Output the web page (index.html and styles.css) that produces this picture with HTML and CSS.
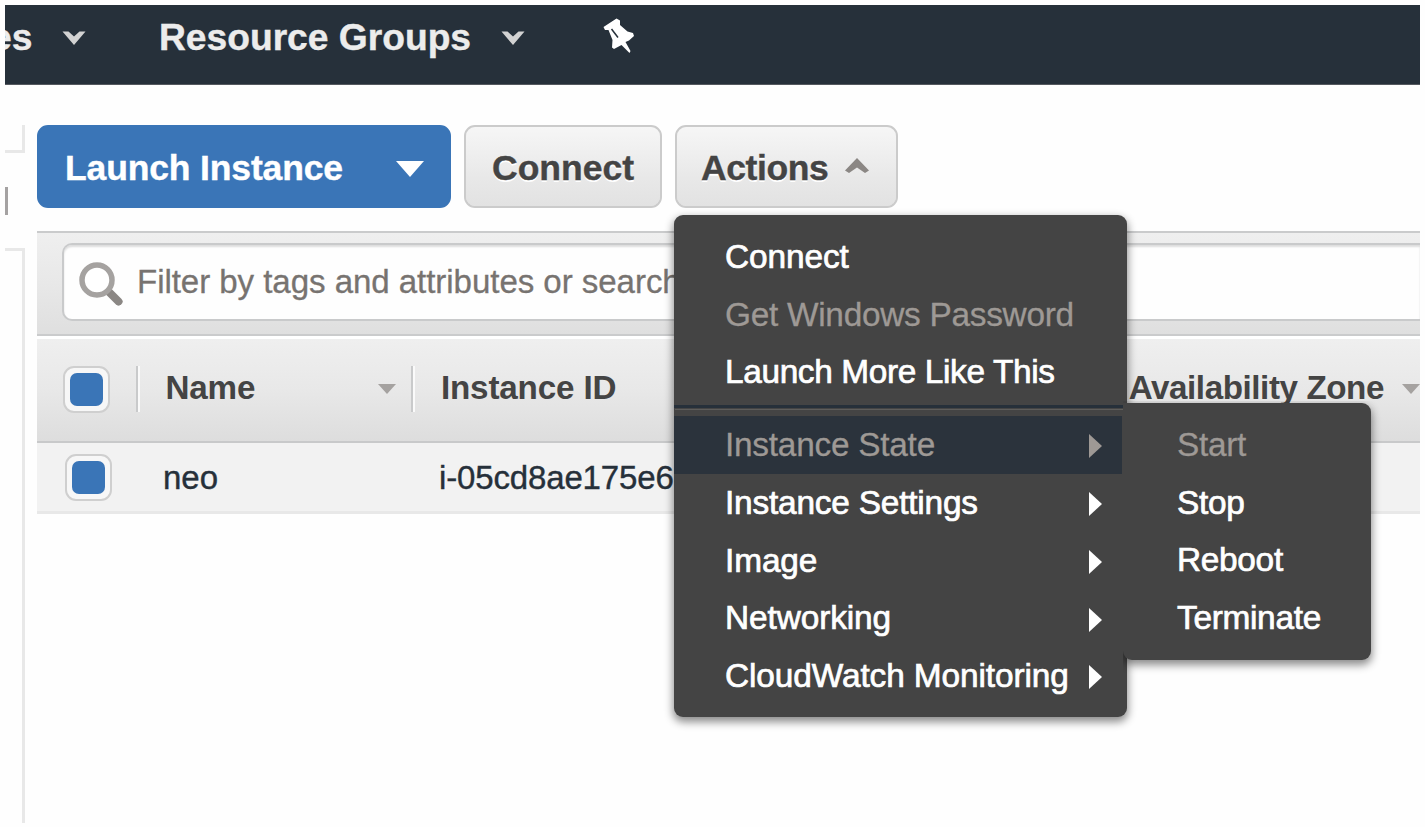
FILE: index.html
```html
<!DOCTYPE html>
<html lang="en">
<head>
<meta charset="utf-8">
<title>EC2 Instances</title>
<link rel="stylesheet" href="styles.css">
</head>
<body>
<div class="app">
  <header class="nav">
    <div class="nav-item nav-services"><span>es</span>
      <svg class="chev" viewBox="0 0 24 14"><path d="M0.500 0.500H6.500L12 5.500L17.500 0.500H23.500L12 14Z"/></svg></div>
    <div class="nav-item nav-groups"><span>Resource Groups</span>
      <svg class="chev" viewBox="0 0 24 14"><path d="M0.500 0.500H6.500L12 5.500L17.500 0.500H23.500L12 14Z"/></svg></div>
    <svg class="pin" viewBox="0 0 32 36"><path fill="#fff" d="M0.500 9L13.500 0.500L17 2.500L17 7L24.500 13.500L30 15L31 18L26 22.500L22.500 24L27.500 33L26.500 35L18.500 27L11 31L9 29.500L9.500 22L5.500 12L2 12Z"/><path d="M8.500 11L15 19.500" stroke="#26303a" stroke-width="1.500"/></svg>
  </header>
  <div class="body">
    <aside class="side">
      <div class="side-top"></div>
      <div class="side-mark"></div>
      <div class="side-panel"></div>
    </aside>
    <main class="main">
      <div class="toolbar">
        <button class="btn primary"><span>Launch Instance</span><svg class="tri" viewBox="0 0 28 16"><path d="M0 0H28L14 16Z"/></svg></button>
        <button class="btn connect"><span>Connect</span></button>
        <div class="dropdown">
          <button class="btn actions"><span>Actions</span><svg class="up" viewBox="0 0 24 15"><path d="M12 0L24 12.500L20 15L12 9.500L4 15L0 12.500Z"/></svg></button>
          <div class="menu">
            <div class="item">Connect</div>
            <div class="item disabled password">Get Windows Password</div>
            <div class="item more">Launch More Like This</div>
            <div class="sep"></div>
            <div class="item disabled active">Instance State<i class="arrow"></i></div>
            <div class="item settings">Instance Settings<i class="arrow"></i></div>
            <div class="item">Image<i class="arrow"></i></div>
            <div class="item">Networking<i class="arrow"></i></div>
            <div class="item">CloudWatch Monitoring<i class="arrow"></i></div>
            <div class="submenu">
              <div class="item disabled">Start</div>
              <div class="item">Stop</div>
              <div class="item">Reboot</div>
              <div class="item">Terminate</div>
            </div>
          </div>
        </div>
      </div>
      <div class="filter">
        <div class="search">
          <svg class="lens" viewBox="0 0 44 44"><path d="M28 28L39.500 39.500" stroke="#8b8784" stroke-width="8" stroke-linecap="round"/><circle cx="18" cy="18" r="15" fill="#fff" stroke="#a5a2a0" stroke-width="5.500"/></svg>
          <span>Filter by tags and attributes or search</span>
        </div>
      </div>
      <div class="row head">
        <div class="check"><i></i></div>
        <div class="cell name"><span>Name</span><svg class="sort" viewBox="0 0 18 10"><path d="M0 0H18L9 10Z"/></svg></div>
        <div class="cell id"><span>Instance ID</span></div>
        <div class="cell zone"><span>Availability Zone</span><svg class="sort" viewBox="0 0 18 10"><path d="M0 0H18L9 10Z"/></svg></div>
      </div>
      <div class="row data">
        <div class="check"><i></i></div>
        <div class="val name-val">neo</div>
        <div class="val id-val">i-05cd8ae175e6</div>
      </div>
    </main>
  </div>
</div>
</body>
</html>
```
FILE: styles.css
```css
* { box-sizing: border-box; }
body {
  margin: 0;
  padding: 5px;
  background: #fefefe;
  font-family: "Liberation Sans", Arial, sans-serif;
  color: #444;
}
.app { width: 1415px; height: 818px; overflow: hidden; display: flex; flex-direction: column; }

.nav { flex: none; height: 80px; background: #26303a; display: flex; align-items: flex-start; color: #ececec; border-bottom: 1px solid #55595f; }
.nav-item { display: flex; align-items: center; height: 64px; font-size: 37.2px; font-weight: bold; white-space: nowrap; }
.nav-item span { -webkit-text-stroke: .4px currentColor; }
.nav-services { width: 153px; margin-left: -14px; }
.nav-services .chev { margin-left: 30px; }
.nav-groups { width: 443px; margin-left: 15px; }
.nav-groups .chev { margin-left: 30px; }
.chev { width: 24px; height: 14px; fill: #d2d2d2; margin-top: 2px; }
.pin { width: 32px; height: 36px; margin: 13px 0 0 1px; }

.body { flex: 1; display: flex; min-height: 0; }
.side { width: 20px; margin-right: 12px; display: flex; flex-direction: column; flex: none; }
.side-top { height: 28px; margin-top: 40px; border: solid #e8e8e8; border-width: 0 3px 3px 0; }
.side-mark { width: 3px; height: 28px; margin-top: 34px; background: #a5a2a2; }
.side-panel { flex: 1; margin-top: 33px; border: solid #e8e8e8; border-width: 3px 3px 0 0; }

.main { flex: 1; min-width: 0; }
.toolbar { display: flex; gap: 13px; padding-top: 40px; height: 146px; }
.btn {
  height: 83px; border: 2px solid #cbcbcb; border-radius: 11px; padding: 4px 0 0 26px;
  background: linear-gradient(#f6f6f6, #e8e8e8 65%, #e2e2e2) padding-box;
  font: bold 35.5px "Liberation Sans", Arial, sans-serif; color: #444;
  display: flex; align-items: center; text-shadow: 0 2px 0 #fff;
}
.btn span { -webkit-text-stroke: .4px currentColor; }
.primary { width: 414px; border-color: #3a75b7; background: #3a75b7; color: #fff; text-shadow: none; }
.primary span { width: 331px; letter-spacing: -.15px; text-align: left; }
.tri { width: 28px; height: 16px; fill: #fff; margin-top: 1px; }
.connect { width: 198px; }
.dropdown { position: relative; }
.actions { width: 223px; padding-left: 24px; }
.actions span { width: 144px; letter-spacing: -.4px; text-align: left; }
.up { width: 24px; height: 15px; fill: #8b8784; margin-top: -6px; flex: none; }

.menu {
  position: absolute; z-index: 2; left: -1px; top: 90px; width: 453px; height: 502px;
  padding-top: 13px; background: #444; border-radius: 9px;
  box-shadow: 0 4px 8px 1px rgba(0,0,0,.45);
}
.item {
  height: 57.75px; padding-left: 51px; display: flex; align-items: center; position: relative;
  font-size: 33.4px; color: #fff; white-space: nowrap; -webkit-text-stroke: .7px currentColor;
  letter-spacing: -.1px;
}
.disabled { color: #9e9995; -webkit-text-stroke-width: .3px; letter-spacing: -.25px; }
.password { letter-spacing: -.28px; }
.more { letter-spacing: -.36px; }
.settings { letter-spacing: -.2px; }
.active { background: #2b333c; margin-right: 5px; }
.sep { height: 3px; margin: 4px 0 8px; background: #26303a; box-shadow: 0 3px 0 -1px #5e5d5b; }
.arrow {
  position: absolute; left: 415px; top: 18px; border: solid transparent;
  border-width: 12px 0 12px 13px; border-left-color: currentColor;
}
.submenu {
  position: absolute; left: 449px; top: 188px; width: 248px; height: 257px; padding-top: 13px;
  background: #444; border-radius: 0 9px 9px 9px;
  box-shadow: 0 4px 8px 1px rgba(0,0,0,.45);
  clip-path: inset(-2px -20px -20px 0);
}
.submenu .item { padding-left: 54px; letter-spacing: -.3px; }

.filter {
  height: 105px; padding: 10px 0 0 25px; border: solid #cacbcc; border-width: 2px 0;
  background: linear-gradient(#efefef, #e8e8e8 50%, #dfdfdf);
}
.search {
  height: 78px; background: #fefefe; border: 2px solid #c9cacb; border-right: 0;
  border-radius: 10px 0 0 10px; display: flex; align-items: center;
  font-size: 33.1px; color: #777370; white-space: nowrap; overflow: hidden;
  box-shadow: inset 0 2px 2px #ddd;
}
.search span { -webkit-text-stroke: .3px currentColor; letter-spacing: -.06px; }
.lens { width: 44px; height: 44px; margin: 4px 14px 0 15px; flex: none; }

.row { display: flex; align-items: center; }
.head {
  height: 107px; border-top: 3px solid #fff; border-bottom: 2px solid #c8c9ca; padding: 0 0 2px 26px;
  background: linear-gradient(#efefef, #e8e8e8 50%, #dddddd) padding-box;
  font-size: 33.2px; font-weight: bold;
}
.data { height: 71px; border-bottom: 3px solid #e8e8e8; padding-left: 28px; background: #f2f2f2; font-size: 33px; color: #26303a; }
.check {
  width: 47px; height: 47px; flex: none; border: 2px solid #cfcfcf; border-radius: 11px;
  background: #f7f7f7; display: flex; align-items: center; justify-content: center;
}
.check i { width: 33px; height: 33px; border-radius: 7px; background: #3a75b7; }
.head .check { margin-right: 26px; }
.cell { display: flex; align-items: center; height: 46px; white-space: nowrap; }
.cell span { margin-top: -3px; letter-spacing: -.15px; }
.name, .id { border-left: 2px solid #c9cacb; box-shadow: inset 2px 0 0 #fafafa; padding-left: 27.500px; }
.name { width: 276px; }
.name .sort { margin-left: auto; margin-right: 15px; }
.id { width: 716px; }
.sort { width: 18px; height: 10px; fill: #a5a2a0; flex: none; }
.zone { padding-left: 3px; }
.zone span { letter-spacing: -.42px; }
.zone .sort { margin-left: 18px; }
.val { -webkit-text-stroke: .4px currentColor; padding-top: 1px; }
.name-val { width: 276px; margin-left: 51px; }
.id-val { letter-spacing: -.15px; }
```
